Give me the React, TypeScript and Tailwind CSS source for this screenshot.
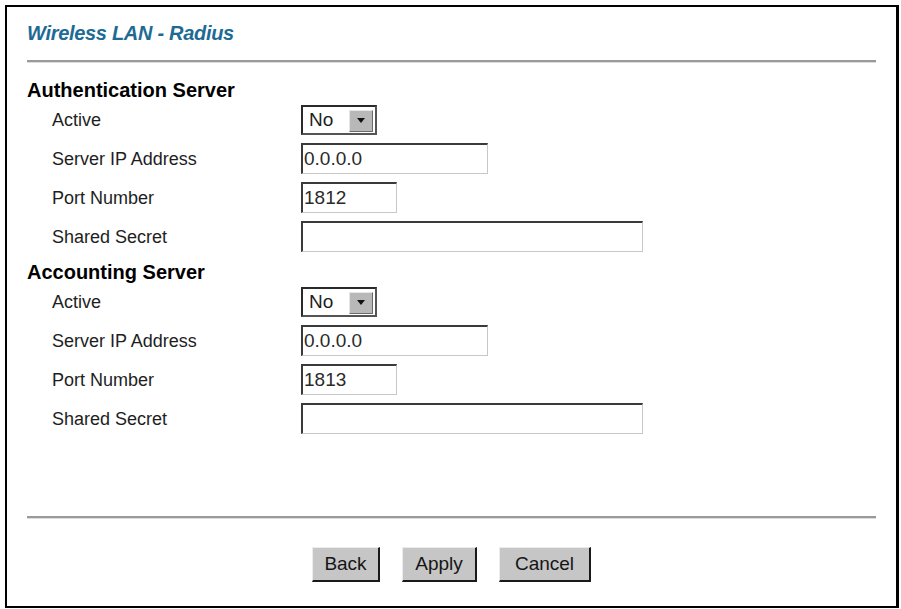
import React from "react";

const font = { fontFamily: '"Liberation Sans", Arial, sans-serif' };

function Label({ children }: { children: React.ReactNode }) {
  return (
    <div className="w-[274px] pl-[25px] text-[18px] leading-[20px] text-[#1e1e1e]">{children}</div>
  );
}

function TextBox({ w, value }: { w: string; value: string }) {
  return (
    <input
      readOnly
      value={value}
      className={`${w} h-[31px] bg-white border-t-2 border-l-2 border-b border-r border-t-[#3a3a3a] border-l-[#3a3a3a] border-b-[#c8c8c8] border-r-[#c8c8c8] pl-[1px] text-[19px] text-[#2a2a2a] outline-none`}
      style={font}
    />
  );
}

function SelectBox() {
  return (
    <div className="w-[76px] h-[30px] flex items-center bg-white border-t-2 border-l-2 border-b-2 border-r-2 border-t-[#2a2a2a] border-l-[#2a2a2a] border-b-[#555] border-r-[#555]">
      <span className="pl-[6px] flex-1 text-[19px] leading-[20px] text-[#1e1e1e]">No</span>
      <div className="w-[24px] h-[22px] mr-[2px] mt-[2px] flex items-center justify-center bg-[#b8b8b8] border-t border-l border-b border-r border-t-[#e6e6e6] border-l-[#e6e6e6] border-b-[#6a6a6a] border-r-[#6a6a6a]">
        <svg width="10" height="6" viewBox="0 0 10 6">
          <path d="M1 0 L9 0 L5 5 Z" fill="#111" />
        </svg>
      </div>
    </div>
  );
}

function Row({ label, children }: { label: string; children: React.ReactNode }) {
  return (
    <div className="flex items-center h-[39px]">
      <Label>{label}</Label>
      {children}
    </div>
  );
}

function Group({ port }: { port: string }) {
  return (
    <>
      <Row label="Active">
        <SelectBox />
      </Row>
      <Row label="Server IP Address">
        <TextBox w="w-[187px]" value="0.0.0.0" />
      </Row>
      <Row label="Port Number">
        <TextBox w="w-[96px]" value={port} />
      </Row>
      <Row label="Shared Secret">
        <TextBox w="w-[342px]" value="" />
      </Row>
    </>
  );
}

function Btn({ w, children }: { w: string; children: React.ReactNode }) {
  return (
    <div
      className={`${w} h-[35px] flex items-center justify-center bg-[#c6c6c6] border-t border-l border-b-2 border-r-2 border-t-[#ececec] border-l-[#ececec] border-b-[#1a1a1a] border-r-[#1a1a1a] text-[19px] text-[#151515]`}
    >
      {children}
    </div>
  );
}

export default function App() {
  return (
    <div className="w-[901px] h-[609px] bg-white pt-[5px] pl-[5px]" style={font}>
      <div className="w-[894px] h-[603px] border-l-2 border-t-2 border-r-[3px] border-b-2 border-black px-[20px] flex flex-col">
        <div className="mt-[17px] h-[19px] leading-[19px] text-[20px] font-bold italic text-[#1d6b94] tracking-[-0.3px]">
          Wireless LAN - Radius
        </div>
        <div className="mt-[17px] h-[3px] border-t-2 border-b border-t-[#9a9a9a] border-b-[#dcdcdc]" />
        <div className="mt-[17px] h-[20px] leading-[20px] text-[20px] font-bold text-black">
          Authentication Server
        </div>
        <Group port="1812" />
        <div className="mt-[6px] h-[20px] leading-[20px] text-[20px] font-bold text-black">
          Accounting Server
        </div>
        <Group port="1813" />
        <div className="mt-[78px] h-[3px] border-t-2 border-b border-t-[#9a9a9a] border-b-[#dcdcdc]" />
        <div className="mt-[28px] flex justify-center gap-[22px]">
          <Btn w="w-[68px]">Back</Btn>
          <Btn w="w-[75px]">Apply</Btn>
          <Btn w="w-[92px]">Cancel</Btn>
        </div>
      </div>
    </div>
  );
}
